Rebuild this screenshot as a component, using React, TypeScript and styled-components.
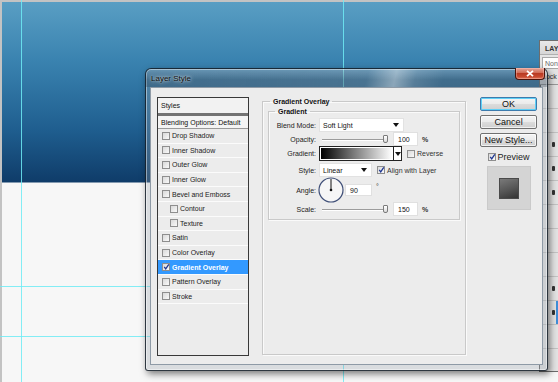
import styled, { createGlobalStyle } from 'styled-components'

const GlobalStyle = createGlobalStyle`
  html, body { margin: 0; padding: 0; background: #f7f7f7; }
  body { font-family: "Liberation Sans", Arial, sans-serif; color: #111; }
  * { box-sizing: border-box; }
`

const effects = [
  { name: 'Drop Shadow' },
  { name: 'Inner Shadow' },
  { name: 'Outer Glow' },
  { name: 'Inner Glow' },
  { name: 'Bevel and Emboss' },
  { name: 'Contour', indent: true },
  { name: 'Texture', indent: true },
  { name: 'Satin' },
  { name: 'Color Overlay' },
  { name: 'Gradient Overlay', checked: true, selected: true },
  { name: 'Pattern Overlay' },
  { name: 'Stroke' },
]

const layerMarks = [false, false, true, true, true, false, false, false, true, true, false]

function Check({ checked }: { checked?: boolean }) {
  return (
    <Box>
      {checked && (
        <svg width="8" height="8" viewBox="0 0 8 8">
          <path d="M1.4 3.9 L3.1 6.2 L6.6 0.9" fill="none" stroke="#1d3592" strokeWidth="1.4" />
        </svg>
      )}
    </Box>
  )
}

function Arrow() {
  return (
    <svg width="6" height="4" viewBox="0 0 6 4">
      <path d="M0 0 H6 L3 4 Z" fill="#111" />
    </svg>
  )
}

export default function App() {
  return (
    <Desktop>
      <GlobalStyle />
      <Guide $vertical $pos={21} />
      <Guide $vertical $pos={343} />
      <Guide $pos={286} />
      <Guide $pos={336} />

      <LayersPanel>
        <PanelHeader>LAY</PanelHeader>
        <PanelSelect>Non</PanelSelect>
        <PanelLock>Lock</PanelLock>
        {layerMarks.map((mark, i) => (
          <LayerRow key={i} $selected={i === 9}>
            {mark && <EyeMark />}
          </LayerRow>
        ))}
      </LayersPanel>

      <Window>
        <TitleBar>
          <Title>Layer Style</Title>
          <CloseButton>
            <svg width="8" height="7" viewBox="0 0 8 7">
              <path d="M1 0.8 L7 6.2 M7 0.8 L1 6.2" stroke="#fff" strokeWidth="1.8" />
            </svg>
          </CloseButton>
        </TitleBar>

        <Content>
          <StyleList>
            <ListHead>Styles</ListHead>
            <ListDivider />
            <ListBlend>Blending Options: Default</ListBlend>
            {effects.map((fx) => (
              <ListItem key={fx.name} $indent={fx.indent} $selected={fx.selected}>
                <Check checked={fx.checked} />
                <span>{fx.name}</span>
              </ListItem>
            ))}
          </StyleList>

          <Group>
            <Legend>Gradient Overlay</Legend>
            <SubGroup>
              <SubLegend>Gradient</SubLegend>

              <Row $h={14}>
                <Label>Blend Mode:</Label>
                <Select $w={85}>
                  <span>Soft Light</span>
                  <Arrow />
                </Select>
              </Row>

              <Row $h={14}>
                <Label>Opacity:</Label>
                <Slider>
                  <Track />
                  <Thumb />
                </Slider>
                <NumberBox $w={25}>100</NumberBox>
                <Unit>%</Unit>
              </Row>

              <Row $h={15}>
                <Label>Gradient:</Label>
                <GradientPicker>
                  <GradientRamp />
                  <GradientDrop>
                    <Arrow />
                  </GradientDrop>
                </GradientPicker>
                <CheckLabel>
                  <Check />
                  <span>Reverse</span>
                </CheckLabel>
              </Row>

              <Row $h={14} $mt={2}>
                <Label>Style:</Label>
                <Select $w={53}>
                  <span>Linear</span>
                  <Arrow />
                </Select>
                <CheckLabel>
                  <Check checked />
                  <span>Align with Layer</span>
                </CheckLabel>
              </Row>

              <Row $h={24} $mt={1}>
                <Label>Angle:</Label>
                <Dial>
                  <svg width="26" height="26" viewBox="0 0 26 26">
                    <circle cx="13" cy="13" r="12" fill="#f6f6f6" stroke="#3f4f78" strokeWidth="1.2" />
                    <line x1="13" y1="13" x2="13" y2="2" stroke="#111" strokeWidth="1" />
                    <circle cx="13" cy="13" r="1.3" fill="#111" />
                  </svg>
                </Dial>
                <NumberBox $w={27} $h={12}>90</NumberBox>
                <Degree>°</Degree>
              </Row>

              <Row $h={14}>
                <Label>Scale:</Label>
                <Slider>
                  <Track />
                  <Thumb />
                </Slider>
                <NumberBox $w={25}>150</NumberBox>
                <Unit>%</Unit>
              </Row>
            </SubGroup>
          </Group>

          <Side>
            <Button $focused>OK</Button>
            <Button>Cancel</Button>
            <Button>New Style...</Button>
            <PreviewToggle>
              <Check checked />
              <span>Preview</span>
            </PreviewToggle>
            <Swatch>
              <SwatchInner />
            </Swatch>
          </Side>
        </Content>
      </Window>
    </Desktop>
  )
}

const Desktop = styled.div`
  position: relative;
  width: 558px;
  height: 382px;
  overflow: hidden;
  background:
    linear-gradient(#c3c3c3, #c3c3c3) top left / 100% 2px no-repeat,
    linear-gradient(#c3c3c3, #c3c3c3) top left / 2px 100% no-repeat,
    linear-gradient(180deg, #5a9fc4 0px, #3a83b0 60px, #1f5e8f 130px, #0f3c69 182px, #f7f7f7 183px) top left / 100% 100% no-repeat;
`

const Guide = styled.div<{ $vertical?: boolean; $pos: number }>`
  position: absolute;
  background: rgba(110, 235, 245, 0.85);
  ${({ $vertical, $pos }) =>
    $vertical
      ? `left: ${$pos}px; top: 0; width: 1px; height: 100%;`
      : `top: ${$pos}px; left: 0; height: 1px; width: 100%;`}
`

const LayersPanel = styled.div`
  position: absolute;
  left: 539px;
  top: 40px;
  width: 19px;
  height: 332px;
  overflow: hidden;
  background: #e4e4e4;
  border: 1px solid #6d6d6d;
  border-right: none;
  font-size: 7px;
`

const PanelHeader = styled.div`
  height: 14px;
  padding: 4px 0 0 5px;
  font-weight: bold;
  color: #333;
  background: linear-gradient(#e9e9e9, #d6d6d6);
  border-bottom: 1px solid #b0b0b0;
`

const PanelSelect = styled.div`
  height: 12px;
  margin: 2px 0 0 2px;
  padding: 2px 0 0 2px;
  background: #fff;
  border: 1px solid #a8a8a8;
  border-right: none;
  color: #666;
`

const PanelLock = styled.div`
  height: 16px;
  padding: 4px 0 0 2px;
  color: #333;
  border-bottom: 1px solid #999;
`

const LayerRow = styled.div<{ $selected?: boolean }>`
  display: flex;
  align-items: center;
  height: 24px;
  padding-left: 12px;
  border-bottom: 1px solid #c4c4c4;
  background: ${({ $selected }) =>
    $selected ? 'linear-gradient(90deg, #e4e4e4 0 16px, #3f8fd8 16px)' : 'transparent'};
  box-shadow: inset 14px 0 0 -13px #555;
`

const EyeMark = styled.div`
  width: 3px;
  height: 5px;
  border-radius: 1px;
  background: #333;
`

const Window = styled.div`
  position: absolute;
  left: 145px;
  top: 68px;
  width: 403px;
  height: 303px;
  display: flex;
  flex-direction: column;
  padding: 0 4px 5px 4px;
  border: 1px solid rgba(15, 25, 35, 0.85);
  border-radius: 6px 6px 3px 3px;
  background: rgba(150, 160, 170, 0.3);
  box-shadow:
    2px 3px 7px rgba(0, 0, 0, 0.5),
    inset 0 0 0 1px rgba(255, 255, 255, 0.45);
`

const TitleBar = styled.div`
  display: flex;
  align-items: flex-start;
  height: 18px;
  flex-shrink: 0;
  margin: 0 -4px;
  padding: 0 4px;
  border-radius: 5px 5px 0 0;
  background:
    linear-gradient(103deg, rgba(255, 255, 255, 0) 0%, rgba(255, 255, 255, 0.05) 55%, rgba(255, 255, 255, 0.4) 62%, rgba(255, 255, 255, 0.12) 67%, rgba(255, 255, 255, 0) 74%),
    linear-gradient(rgba(255, 255, 255, 0.12), rgba(20, 40, 60, 0.25) 60%);
`

const Title = styled.div`
  padding: 5px 0 0 1px;
  font-size: 8px;
  color: #0d0d0d;
  text-shadow: 0 0 4px rgba(255, 255, 255, 0.8), 0 0 2px rgba(255, 255, 255, 0.6);
`

const CloseButton = styled.div`
  margin: -1px -2px 0 auto;
  width: 30px;
  height: 12px;
  display: flex;
  align-items: center;
  justify-content: center;
  border: 1px solid #4a130b;
  border-top: none;
  border-radius: 0 0 4px 4px;
  background: linear-gradient(#e6a79a 0%, #d06a55 45%, #b93a23 50%, #c84a30 80%, #e07a5e 100%);
  box-shadow: inset 0 0 0 1px rgba(255, 200, 190, 0.4);
`

const Content = styled.div`
  flex: 1;
  display: flex;
  align-items: stretch;
  padding: 9px 5px 8px 6px;
  background: #ececec;
  border: 1px solid #8e9aa6;
`

const StyleList = styled.div`
  width: 92px;
  flex-shrink: 0;
  display: flex;
  flex-direction: column;
  border: 1px solid #383838;
  background: #ececec;
  font-size: 7px;
`

const ListHead = styled.div`
  height: 15px;
  padding: 4px 0 0 3px;
  background: #f2f2f2;
`

const ListDivider = styled.div`
  height: 3px;
  background: #737373;
`

const ListBlend = styled.div`
  height: 13px;
  padding: 3px 0 0 3px;
  background: #f4f4f4;
  border-bottom: 1px solid #9a9a9a;
`

const ListItem = styled.div<{ $indent?: boolean; $selected?: boolean }>`
  display: flex;
  align-items: center;
  gap: 2px;
  height: 14.6px;
  padding-left: ${({ $indent }) => ($indent ? '12px' : '4px')};
  border-bottom: 1px solid #fbfbfb;
  background: ${({ $selected }) => ($selected ? '#3399ff' : 'transparent')};
  color: ${({ $selected }) => ($selected ? '#fff' : '#222')};
  font-weight: ${({ $selected }) => ($selected ? 'bold' : 'normal')};
`

const Box = styled.div`
  width: 8px;
  height: 8px;
  flex-shrink: 0;
  display: flex;
  align-items: center;
  justify-content: center;
  border: 1px solid #8e8e8e;
  background: linear-gradient(135deg, #d9d9d9, #f9f9f9);
  overflow: visible;

  svg {
    margin: -1px -1px 0 0;
  }
`

const Group = styled.fieldset`
  width: 205px;
  margin: 0 0 1px 13px;
  padding: 0 5px 4px 5px;
  border: 1px solid #c9c9c9;
  box-shadow: inset 1px 1px 0 #fafafa, 1px 1px 0 #fafafa;
  min-width: 0;
`

const Legend = styled.legend`
  margin-left: 2px;
  padding: 0 3px;
  font-size: 7px;
  line-height: 9px;
  font-weight: bold;
  color: #111;
`

const SubGroup = styled.fieldset`
  margin: 1px 0 0 0;
  padding: 2px 4px 3px 4px;
  border: 1px solid #c9c9c9;
  box-shadow: inset 1px 1px 0 #fafafa, 1px 1px 0 #fafafa;
  min-width: 0;
`

const SubLegend = styled(Legend)`
  margin-left: 2px;
`

const Row = styled.div<{ $h: number; $mt?: number }>`
  display: flex;
  align-items: center;
  height: ${({ $h }) => $h}px;
  margin-top: ${({ $mt }) => $mt ?? 0}px;
  font-size: 7px;
`

const Label = styled.div`
  width: 46px;
  flex-shrink: 0;
  padding-right: 3px;
  text-align: right;
  color: #222;
`

const Select = styled.div<{ $w: number }>`
  width: ${({ $w }) => $w}px;
  height: 14px;
  display: flex;
  align-items: center;
  justify-content: space-between;
  padding: 0 4px 0 3px;
  background: #fff;
  border: 1px solid #e2e2e2;
  color: #111;
`

const Slider = styled.div`
  width: 67px;
  margin: 0 4px 0 3px;
  display: flex;
  align-items: center;
`

const Track = styled.div`
  flex: 1;
  height: 1px;
  background: #9c9c9c;
  box-shadow: 0 1px 0 #fff;
`

const Thumb = styled.div`
  width: 5px;
  height: 8px;
  margin-left: -2px;
  margin-right: 1px;
  border: 1px solid #7b7b7b;
  border-radius: 1px 1px 2px 2px;
  background: linear-gradient(#ffffff, #dadada);
`

const NumberBox = styled.div<{ $w: number; $h?: number }>`
  width: ${({ $w }) => $w}px;
  height: ${({ $h }) => $h ?? 14}px;
  display: flex;
  align-items: center;
  padding-left: 4px;
  background: #fff;
  border: 1px solid #e0e0e0;
  color: #111;
`

const Unit = styled.span`
  margin-left: 4px;
  font-weight: bold;
  color: #333;
`

const Degree = styled.span`
  margin: -7px 0 0 4px;
  color: #333;
`

const Dial = styled.div`
  width: 26px;
  height: 26px;
  flex-shrink: 0;
  margin: 0 1px 0 -1px;
  display: flex;
`

const GradientPicker = styled.div`
  width: 83px;
  height: 15px;
  display: flex;
  border: 1px solid #222;
  background: #fff;
`

const GradientRamp = styled.div`
  flex: 1;
  margin: 1px;
  background: linear-gradient(90deg, #000 0%, #777 45%, #fff 100%);
`

const GradientDrop = styled.div`
  width: 8px;
  display: flex;
  align-items: center;
  justify-content: center;
  border-left: 1px solid #222;
  background: #fff;
`

const CheckLabel = styled.div`
  display: flex;
  align-items: center;
  gap: 2px;
  margin-left: 5px;
  color: #333;
`

const Side = styled.div`
  width: 57px;
  margin-left: 14px;
  display: flex;
  flex-direction: column;
  align-items: stretch;
  gap: 4px;
`

const Button = styled.button<{ $focused?: boolean }>`
  height: 14px;
  padding: 0;
  font-family: inherit;
  font-size: 9px;
  line-height: 12px;
  color: #111;
  border: 1px solid ${({ $focused }) => ($focused ? '#3d7bad' : '#707070')};
  border-radius: 2px;
  background: linear-gradient(#f4f4f4 0%, #ebebeb 48%, #dcdcdc 52%, #cfcfcf 100%);
  box-shadow: ${({ $focused }) =>
    $focused ? 'inset 0 0 0 1px #5fd0f7' : 'inset 0 0 0 1px rgba(255, 255, 255, 0.7)'};
`

const PreviewToggle = styled.div`
  display: flex;
  align-items: center;
  justify-content: center;
  gap: 2px;
  margin-top: 1px;
  height: 10px;
  font-size: 9px;
  color: #222;
`

const Swatch = styled.div`
  width: 44px;
  height: 44px;
  margin: 0 auto;
  display: flex;
  align-items: center;
  justify-content: center;
  background: #d4d4d4;
  border: 1px solid #cacaca;
`

const SwatchInner = styled.div`
  width: 20px;
  height: 21px;
  background: linear-gradient(160deg, #7a7a7a 0%, #555 55%, #333 100%);
  border: 1px solid #4a4a4a;
`
